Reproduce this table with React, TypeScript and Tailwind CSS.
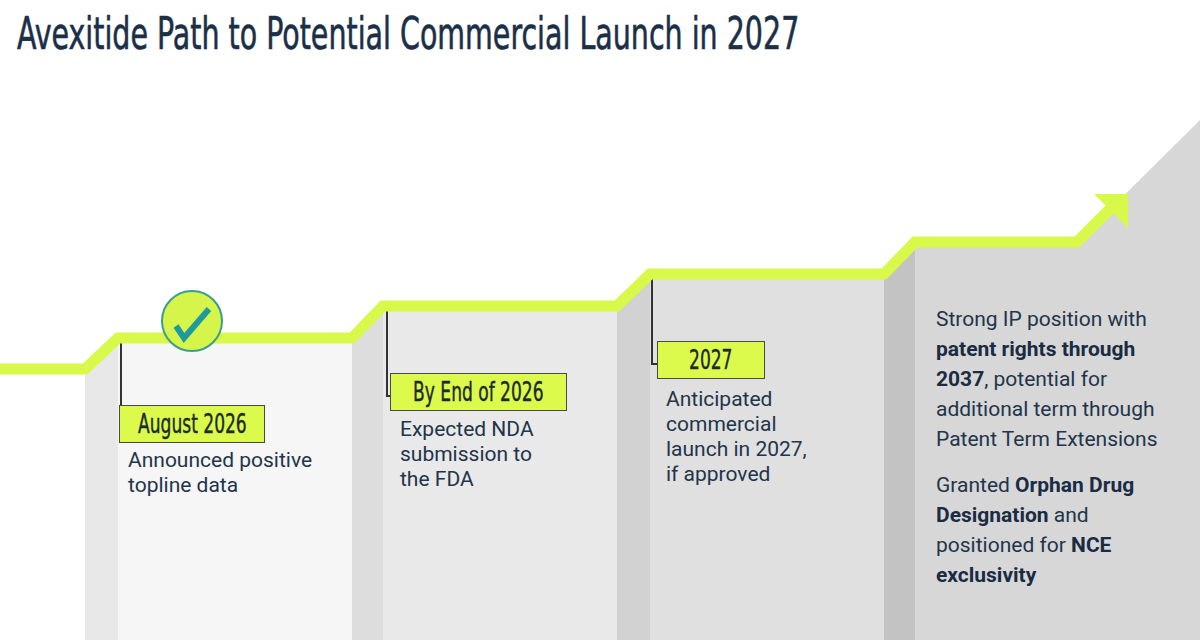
import type { JSX } from "react";

// Staircase slide: each step = slanted side face + front face, lime path drawn on top.

const narrow = "font-['Liberation_Sans_Narrow','DejaVu_Sans_Condensed','DejaVu_Sans',sans-serif]";

function Label({ text, width }: { text: string; width: string }): JSX.Element {
  return (
    <div
      className={`${width} h-[38px] flex items-center justify-center border border-[#4a4a4a] bg-[#dcfa4c] text-[26px] leading-none text-[#1c2b2a] ${narrow}`}
    >
      <span className="inline-block scale-x-[0.73] whitespace-nowrap [-webkit-text-stroke:0.4px_#1c2b2a]">{text}</span>
    </div>
  );
}

function Body({ lines }: { lines: string[] }): JSX.Element {
  return (
    <div className="text-[21px] leading-[25px] text-[#22344a]">
      {lines.map((l) => (
        <div key={l}>{l}</div>
      ))}
    </div>
  );
}

export default function App(): JSX.Element {
  return (
    <div className="relative flex h-[640px] w-[1200px] flex-col overflow-hidden bg-white font-['Roboto',sans-serif]">
      <div className="h-[70px] shrink-0 pl-[17px] pt-[8px]">
        <h1
          className={`origin-left scale-x-[0.72] whitespace-nowrap text-[44px] leading-[52px] text-[#1b2f47] [-webkit-text-stroke:0.6px_#1b2f47] ${narrow}`}
        >
          Avexitide Path to Potential Commercial Launch in 2027
        </h1>
      </div>

      <div className="flex h-[570px] items-end">
        <div className="w-[85px] shrink-0" />

        {/* step 1 */}
        <div className="h-[302px] w-[33px] shrink-0 bg-[#e8e8e8] [clip-path:polygon(0_31px,100%_0,100%_100%,0_100%)]" />
        <div className="h-[302px] w-[234px] shrink-0 bg-[#f6f6f6]">
          <div className="ml-[2px] h-[67px] w-[2px] bg-[#333]" />
          <div className="ml-[1px]">
            <Label text="August 2026" width="w-[146px]" />
          </div>
          <div className="ml-[10px] mt-[5px]">
            <Body lines={["Announced positive", "topline data"]} />
          </div>
        </div>

        {/* step 2 */}
        <div className="h-[334px] w-[31px] shrink-0 bg-[#dddddd] [clip-path:polygon(0_32px,100%_0,100%_100%,0_100%)]" />
        <div className="h-[334px] w-[234px] shrink-0 bg-[#e9e9e9]">
          <div className="ml-[3px] h-[91px] w-[8px] border-b-2 border-l-2 border-[#333]" />
          <div className="ml-[7px] -mt-[24px]">
            <Label text="By End of 2026" width="w-[177px]" />
          </div>
          <div className="ml-[17px] mt-[6px]">
            <Body lines={["Expected NDA", "submission to", "the FDA"]} />
          </div>
        </div>

        {/* step 3 */}
        <div className="h-[366px] w-[33px] shrink-0 bg-[#d2d2d2] [clip-path:polygon(0_32px,100%_0,100%_100%,0_100%)]" />
        <div className="h-[366px] w-[234px] shrink-0 bg-[#e0e0e0]">
          <div className="ml-[1px] h-[91px] w-[8px] border-b-2 border-l-2 border-[#333]" />
          <div className="ml-[7px] -mt-[24px]">
            <Label text="2027" width="w-[108px]" />
          </div>
          <div className="ml-[16px] mt-[8px]">
            <Body lines={["Anticipated", "commercial", "launch in 2027,", "if approved"]} />
          </div>
        </div>

        {/* step 4 */}
        <div className="h-[398px] w-[31px] shrink-0 bg-[#c3c3c3] [clip-path:polygon(0_32px,100%_0,100%_100%,0_100%)]" />
        <div className="h-[520px] w-[285px] shrink-0 bg-[#d7d7d7] pl-[21px] pt-[184px] text-[21px] leading-[30px] text-[#22344a] [clip-path:polygon(0_122px,162px_122px,100%_0,100%_100%,0_100%)]">
          <p>
            Strong IP position with
            <br />
            <b className="text-[#1a2b44]">patent rights through</b>
            <br />
            <b className="text-[#1a2b44]">2037</b>, potential for
            <br />
            additional term through
            <br />
            Patent Term Extensions
          </p>
          <p className="mt-[16px]">
            Granted <b className="text-[#1a2b44]">Orphan Drug</b>
            <br />
            <b className="text-[#1a2b44]">Designation</b> and
            <br />
            positioned for <b className="text-[#1a2b44]">NCE</b>
            <br />
            <b className="text-[#1a2b44]">exclusivity</b>
          </p>
        </div>
      </div>

      {/* lime path, arrow and check badge lie over the steps */}
      <svg className="pointer-events-none absolute left-0 top-0" width="1200" height="640" viewBox="0 0 1200 640">
        <polyline
          points="0,369 85,369 118,338 352,338 383,306 617,306 650,274 884,274 915,242 1077,242 1112,207"
          fill="none"
          stroke="#d8f84a"
          strokeWidth="11"
          strokeLinejoin="miter"
        />
        <polygon points="1094,194 1128,194 1128,228" fill="#d8f84a" />
        <circle cx="192" cy="321" r="30" fill="#d6f54b" stroke="#3a9e8c" strokeWidth="2" />
        <path
          d="M176 326 L184 338 L209 309"
          fill="none"
          stroke="#1f9a9e"
          strokeWidth="6"
          strokeLinecap="butt"
          strokeLinejoin="miter"
        />
      </svg>
    </div>
  );
}
